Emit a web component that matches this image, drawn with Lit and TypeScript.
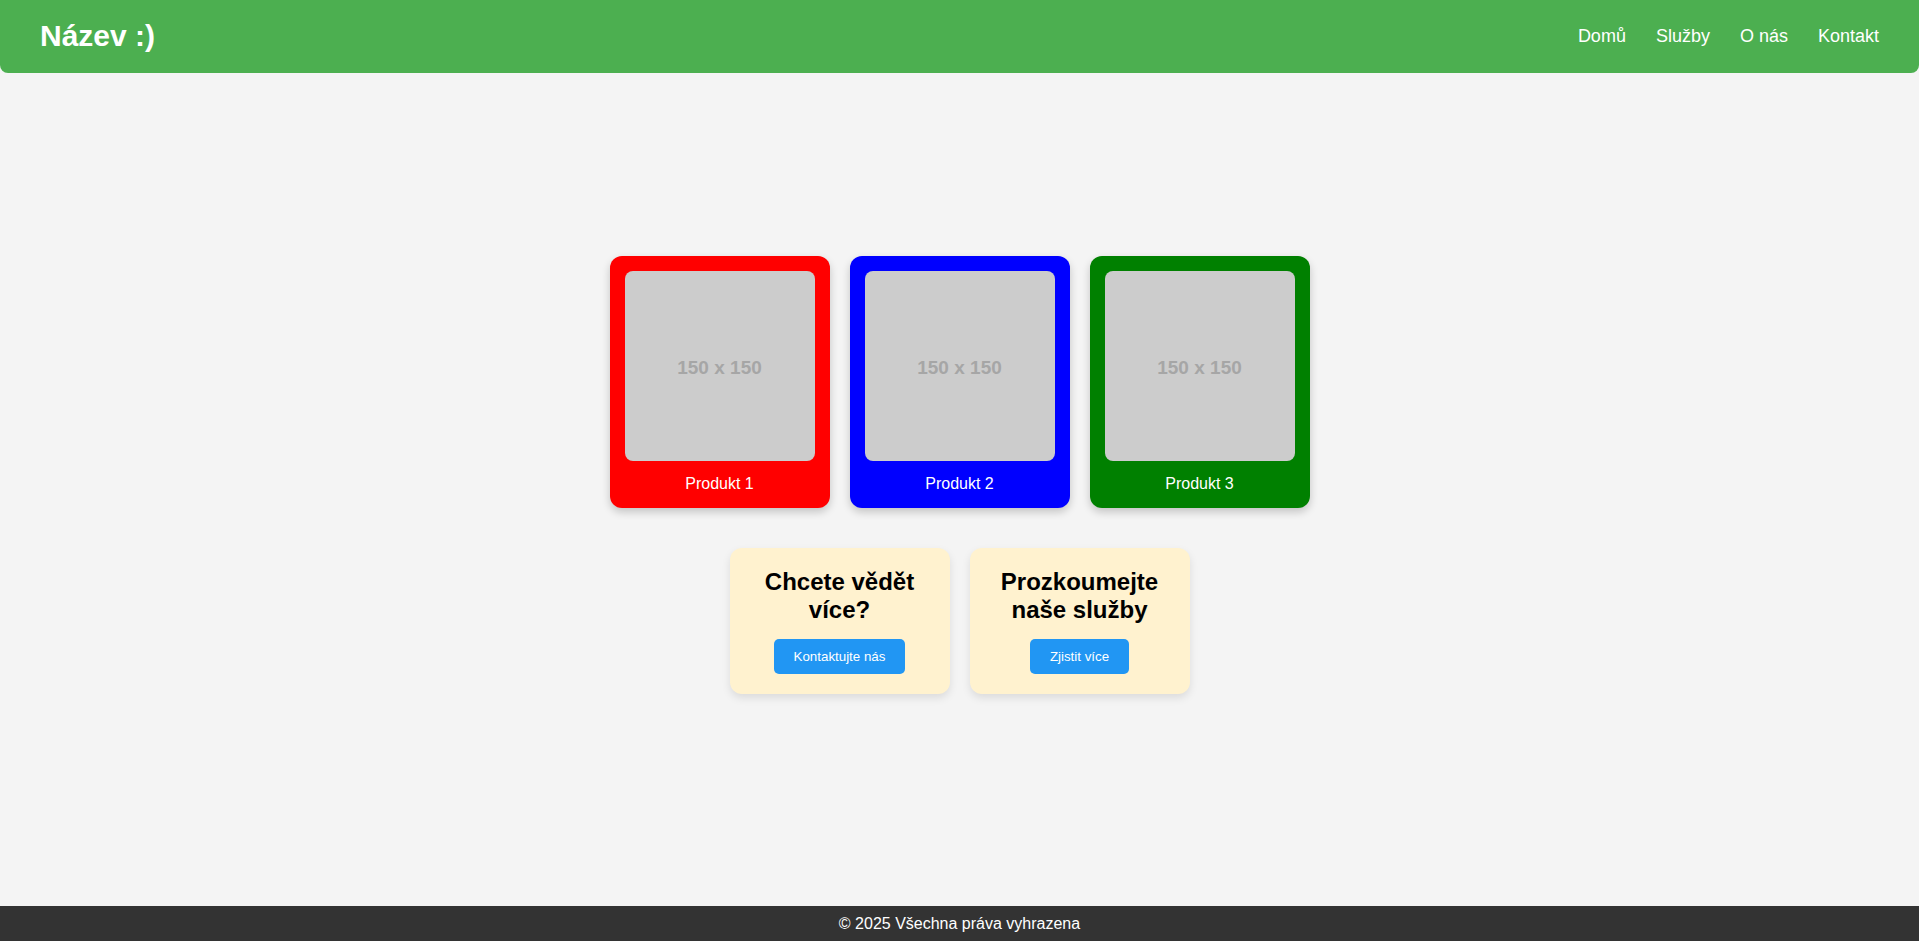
import { LitElement, html, css } from "lit";
import { customElement } from "lit/decorators.js";

const NAV = ["Domů", "Služby", "O nás", "Kontakt"];

const PRODUCTS = [
  { name: "Produkt 1", tone: "red" },
  { name: "Produkt 2", tone: "blue" },
  { name: "Produkt 3", tone: "green" },
];

const OFFERS = [
  { title: "Chcete vědět více?", action: "Kontaktujte nás" },
  { title: "Prozkoumejte naše služby", action: "Zjistit více" },
];

@customElement("app-root")
export class AppRoot extends LitElement {
  static styles = css`
    :host {
      display: flex;
      flex-direction: column;
      min-height: 100vh;
      background: #f4f4f4;
      color: #000;
      font: 16px/18px Arial, "Liberation Sans", sans-serif;
    }
    h1, h2, p { margin: 0; }
    .header {
      display: flex;
      flex-wrap: wrap;
      justify-content: space-between;
      align-items: center;
      padding: 18px 40px 20px;
      background: #4caf50;
      color: #fff;
      border-radius: 0 0 8px 8px;
    }
    .title { font-size: 30px; line-height: 35px; }
    .nav { display: flex; flex-wrap: wrap; gap: 30px; }
    .link {
      color: #fff;
      font-size: 18px;
      line-height: 22px;
      text-decoration: none;
    }
    .link:hover { text-decoration: underline; }
    .main {
      flex: 1;
      display: flex;
      flex-direction: column;
      justify-content: center;
      gap: 40px;
      padding-bottom: 30px;
    }
    .row {
      display: flex;
      flex-wrap: wrap;
      justify-content: center;
      gap: 20px;
    }
    .card {
      box-sizing: border-box;
      width: 220px;
      border-radius: 12px;
      text-align: center;
    }
    .product {
      padding: 15px;
      color: #fff;
      box-shadow: 0 4px 8px rgba(0, 0, 0, 0.2);
    }
    .red { background: red; }
    .blue { background: blue; }
    .green { background: green; }
    .thumb {
      box-sizing: border-box;
      display: grid;
      place-items: center;
      aspect-ratio: 1;
      margin-bottom: 14px;
      padding-top: 4px;
      border-radius: 8px;
      background: #ccc;
      color: #a6a6a6;
      font: bold 19px/22px Arial, "Liberation Sans", sans-serif;
    }
    .offer {
      padding: 20px;
      background: #fff2cf;
      box-shadow: 0 4px 8px rgba(0, 0, 0, 0.1);
    }
    .offer-title { margin-bottom: 15px; font-size: 24px; line-height: 28px; }
    .button {
      padding: 10px 20px;
      border: none;
      border-radius: 5px;
      background: #2196f3;
      color: #fff;
      font-family: Arial, "Liberation Sans", sans-serif;
      line-height: 15px;
      cursor: pointer;
      vertical-align: top;
    }
    .button:hover { background: #1976d2; }
    .footer {
      padding: 9px 8px 8px;
      background: #333;
      color: #fff;
      text-align: center;
    }
  `;

  render() {
    return html`
      <header class="header">
        <h1 class="title">Název :)</h1>
        <nav class="nav">
          ${NAV.map((label) => html`<a class="link" href="#">${label}</a>`)}
        </nav>
      </header>
      <main class="main">
        <section class="row">
          ${PRODUCTS.map(
            (p) => html`
              <article class="card product ${p.tone}">
                <div class="thumb">150 x 150</div>
                <p>${p.name}</p>
              </article>
            `
          )}
        </section>
        <section class="row">
          ${OFFERS.map(
            (o) => html`
              <article class="card offer">
                <h2 class="offer-title">${o.title}</h2>
                <button class="button" type="button">${o.action}</button>
              </article>
            `
          )}
        </section>
      </main>
      <footer class="footer"><p>© 2025 Všechna práva vyhrazena</p></footer>
    `;
  }
}
